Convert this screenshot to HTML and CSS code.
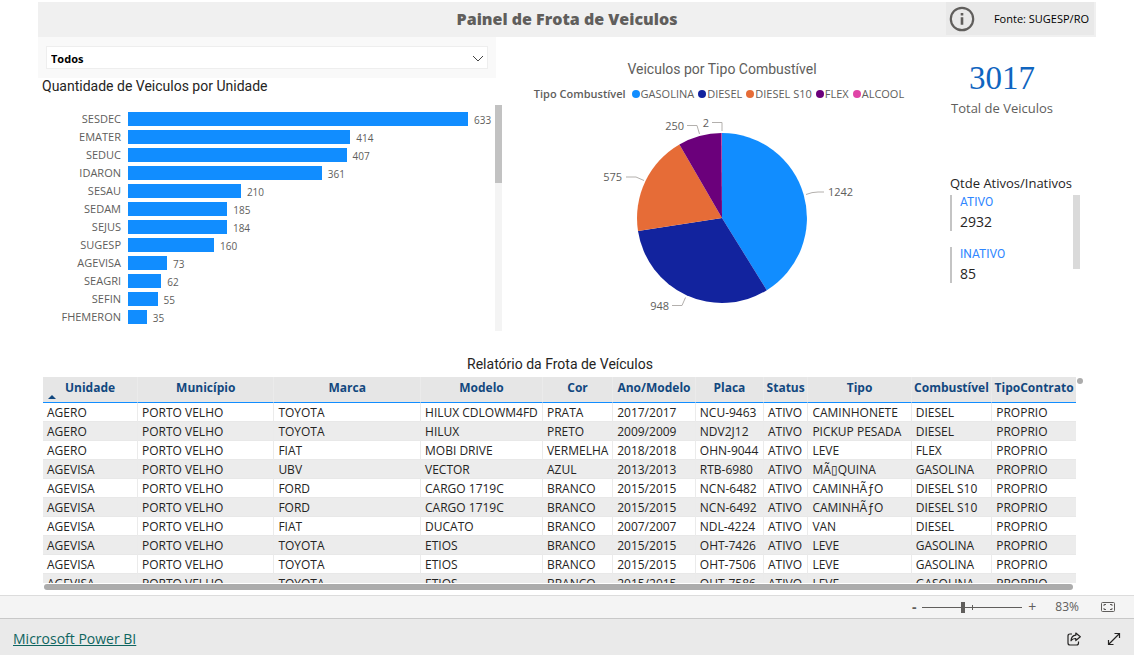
FILE: index.html
```html
<!DOCTYPE html>
<html lang="pt-BR">
<head>
<meta charset="utf-8">
<title>Painel de Frota de Veiculos</title>
<link rel="stylesheet" href="styles.css">
</head>
<body>
<main class="report">
  <header class="banner">
    <h1 class="banner-title">Painel de Frota de Veiculos</h1>
    <div class="source">
      <svg class="info-icon" viewBox="0 0 26 26" aria-hidden="true"><circle cx="13" cy="13" r="11.2" fill="none" stroke="#605e5c" stroke-width="2.2"/><path d="M13 7v2.6M13 11.2v7.6" stroke="#605e5c" stroke-width="2.6"/></svg>
      <span>Fonte: SUGESP/RO</span>
    </div>
  </header>

  <div class="visuals">
    <section class="units">
      <div class="slicer">
        <select class="slicer-select" aria-label="Unidade"><option>Todos</option></select>
        <svg class="slicer-arrow" viewBox="0 0 12 8" aria-hidden="true"><path d="M1 1l5 5 5-5" fill="none" stroke="#444" stroke-width="1"/></svg>
      </div>
      <h2 class="visual-title units-title">Quantidade de Veiculos por Unidade</h2>
      <div class="bar-area">
        <ul class="bars">
          <li class="bar-row"><span class="bar-name">SESDEC</span><span class="track"><span class="bar" style="width:100%"></span><span class="bar-value">633</span></span></li>
          <li class="bar-row"><span class="bar-name">EMATER</span><span class="track"><span class="bar" style="width:65.4%"></span><span class="bar-value">414</span></span></li>
          <li class="bar-row"><span class="bar-name">SEDUC</span><span class="track"><span class="bar" style="width:64.3%"></span><span class="bar-value">407</span></span></li>
          <li class="bar-row"><span class="bar-name">IDARON</span><span class="track"><span class="bar" style="width:57%"></span><span class="bar-value">361</span></span></li>
          <li class="bar-row"><span class="bar-name">SESAU</span><span class="track"><span class="bar" style="width:33.2%"></span><span class="bar-value">210</span></span></li>
          <li class="bar-row"><span class="bar-name">SEDAM</span><span class="track"><span class="bar" style="width:29.2%"></span><span class="bar-value">185</span></span></li>
          <li class="bar-row"><span class="bar-name">SEJUS</span><span class="track"><span class="bar" style="width:29.1%"></span><span class="bar-value">184</span></span></li>
          <li class="bar-row"><span class="bar-name">SUGESP</span><span class="track"><span class="bar" style="width:25.3%"></span><span class="bar-value">160</span></span></li>
          <li class="bar-row"><span class="bar-name">AGEVISA</span><span class="track"><span class="bar" style="width:11.5%"></span><span class="bar-value">73</span></span></li>
          <li class="bar-row"><span class="bar-name">SEAGRI</span><span class="track"><span class="bar" style="width:9.8%"></span><span class="bar-value">62</span></span></li>
          <li class="bar-row"><span class="bar-name">SEFIN</span><span class="track"><span class="bar" style="width:8.7%"></span><span class="bar-value">55</span></span></li>
          <li class="bar-row"><span class="bar-name">FHEMERON</span><span class="track"><span class="bar" style="width:5.5%"></span><span class="bar-value">35</span></span></li>
        </ul>
        <div class="bar-scroll"><div class="bar-thumb"></div></div>
      </div>
    </section>

    <section class="fuel">
      <h2 class="visual-title fuel-title">Veiculos por Tipo Combustível</h2>
      <div class="legend">
        <strong class="legend-title">Tipo Combustível</strong>
        <span class="key gasolina">GASOLINA</span>
        <span class="key diesel">DIESEL</span>
        <span class="key s10">DIESEL S10</span>
        <span class="key flex">FLEX</span>
        <span class="key alcool">ALCOOL</span>
      </div>
      <svg class="pie" viewBox="0 0 320 200" role="img" aria-label="Veiculos por Tipo Combustível">
        <path fill="#118dff" d="M160 103V18A85 85 0 0 1 204.800 175.200Z"/>
        <path fill="#12239e" d="M160 103L204.800 175.200A85 85 0 0 1 76 115.900Z"/>
        <path fill="#e66c37" d="M160 103L76 115.900A85 85 0 0 1 117.400 29.500Z"/>
        <path fill="#6b007b" d="M160 103L117.400 29.500A85 85 0 0 1 159.600 18Z"/>
        <path fill="#e044a7" d="M160 103L159.600 18H160Z"/>
        <g fill="none" stroke="#b3b0ad"><path d="M244 79.500Q250 77 256 77H262"/><path d="M110 190.500H120L123.500 182.500"/><path d="M64 62H74L82 65.500"/><path d="M125 10.500H135L137.500 19"/><path d="M150 7.500H160V16"/></g>
        <g class="pie-label"><text x="266" y="81">1242</text><text x="107" y="195" text-anchor="end">948</text><text x="60" y="66" text-anchor="end">575</text><text x="122" y="15" text-anchor="end">250</text><text x="147" y="12" text-anchor="end">2</text></g>
      </svg>
    </section>

    <section class="totals">
      <div class="total-number">3017</div>
      <div class="total-caption">Total de Veiculos</div>
      <h2 class="status-title">Qtde Ativos/Inativos</h2>
      <div class="status-area">
        <dl class="status-list">
          <div class="status-card"><dt>ATIVO</dt><dd>2932</dd></div>
          <div class="status-card"><dt>INATIVO</dt><dd>85</dd></div>
        </dl>
        <div class="status-thumb"></div>
      </div>
    </section>
  </div>

  <section class="fleet">
    <h2 class="visual-title fleet-title">Relatório da Frota de Veículos</h2>
    <div class="fleet-body">
      <div class="fleet-view">
        <table class="fleet-table">
          <colgroup><col class="c-unit"><col class="c-city"><col class="c-brand"><col class="c-model"><col class="c-color"><col class="c-year"><col class="c-plate"><col class="c-status"><col class="c-type"><col class="c-fuel"><col class="c-deal"></colgroup>
          <thead><tr><th class="sorted">Unidade</th><th>Município</th><th>Marca</th><th>Modelo</th><th>Cor</th><th>Ano/Modelo</th><th>Placa</th><th>Status</th><th>Tipo</th><th>Combustível</th><th>TipoContrato</th></tr></thead>
          <tbody>
            <tr><td>AGERO</td><td>PORTO VELHO</td><td>TOYOTA</td><td>HILUX CDLOWM4FD</td><td>PRATA</td><td>2017/2017</td><td>NCU-9463</td><td>ATIVO</td><td>CAMINHONETE</td><td>DIESEL</td><td>PROPRIO</td></tr>
            <tr><td>AGERO</td><td>PORTO VELHO</td><td>TOYOTA</td><td>HILUX</td><td>PRETO</td><td>2009/2009</td><td>NDV2J12</td><td>ATIVO</td><td>PICKUP PESADA</td><td>DIESEL</td><td>PROPRIO</td></tr>
            <tr><td>AGERO</td><td>PORTO VELHO</td><td>FIAT</td><td>MOBI DRIVE</td><td>VERMELHA</td><td>2018/2018</td><td>OHN-9044</td><td>ATIVO</td><td>LEVE</td><td>FLEX</td><td>PROPRIO</td></tr>
            <tr><td>AGEVISA</td><td>PORTO VELHO</td><td>UBV</td><td>VECTOR</td><td>AZUL</td><td>2013/2013</td><td>RTB-6980</td><td>ATIVO</td><td>MÃ▯QUINA</td><td>GASOLINA</td><td>PROPRIO</td></tr>
            <tr><td>AGEVISA</td><td>PORTO VELHO</td><td>FORD</td><td>CARGO 1719C</td><td>BRANCO</td><td>2015/2015</td><td>NCN-6482</td><td>ATIVO</td><td>CAMINHÃƒO</td><td>DIESEL S10</td><td>PROPRIO</td></tr>
            <tr><td>AGEVISA</td><td>PORTO VELHO</td><td>FORD</td><td>CARGO 1719C</td><td>BRANCO</td><td>2015/2015</td><td>NCN-6492</td><td>ATIVO</td><td>CAMINHÃƒO</td><td>DIESEL S10</td><td>PROPRIO</td></tr>
            <tr><td>AGEVISA</td><td>PORTO VELHO</td><td>FIAT</td><td>DUCATO</td><td>BRANCO</td><td>2007/2007</td><td>NDL-4224</td><td>ATIVO</td><td>VAN</td><td>DIESEL</td><td>PROPRIO</td></tr>
            <tr><td>AGEVISA</td><td>PORTO VELHO</td><td>TOYOTA</td><td>ETIOS</td><td>BRANCO</td><td>2015/2015</td><td>OHT-7426</td><td>ATIVO</td><td>LEVE</td><td>GASOLINA</td><td>PROPRIO</td></tr>
            <tr><td>AGEVISA</td><td>PORTO VELHO</td><td>TOYOTA</td><td>ETIOS</td><td>BRANCO</td><td>2015/2015</td><td>OHT-7506</td><td>ATIVO</td><td>LEVE</td><td>GASOLINA</td><td>PROPRIO</td></tr>
            <tr><td>AGEVISA</td><td>PORTO VELHO</td><td>TOYOTA</td><td>ETIOS</td><td>BRANCO</td><td>2015/2015</td><td>OHT-7586</td><td>ATIVO</td><td>LEVE</td><td>GASOLINA</td><td>PROPRIO</td></tr>
          </tbody>
        </table>
      </div>
      <div class="fleet-dot"></div>
    </div>
    <div class="fleet-scroll"></div>
  </section>
</main>

<div class="zoom-bar">
  <button class="zoom-button zoom-out" aria-label="Reduzir">-</button>
  <input class="zoom-range" type="range" min="0" max="100" value="40" aria-label="Zoom">
  <button class="zoom-button" aria-label="Ampliar">+</button>
  <span class="zoom-value">83%</span>
  <button class="icon-button" aria-label="Ajustar à página"><svg width="14" height="10" viewBox="0 0 14 10" fill="none" stroke="#605e5c"><rect x=".5" y=".5" width="13" height="9" rx="1"/><path d="M3 4V2.500H5M9 2.500H11V4M11 6V7.500H9M5 7.500H3V6"/></svg></button>
</div>
<footer class="brand-bar">
  <a class="brand" href="#">Microsoft Power BI</a>
  <button class="icon-button" aria-label="Compartilhar"><svg width="14" height="14" viewBox="0 0 14 14" fill="none" stroke="#252423" stroke-width="1.200" stroke-linejoin="round"><path d="M5 2H3Q1 2 1 4V11Q1 13 3 13H9.500Q11.500 13 11.500 11V9.500"/><path d="M8.800 1L13.300 4.800 8.800 8.500V6.500Q5.500 6.300 4 8.800 4.300 3.600 8.800 3.200Z"/></svg></button>
  <button class="icon-button" aria-label="Tela inteira"><svg width="14" height="14" viewBox="0 0 14 14" fill="none" stroke="#252423" stroke-width="1.200"><path d="M1.500 12.500L12.500 1.500M7.500 1.500H12.500V6M1.500 8V12.500H6.500"/></svg></button>
</footer>
</body>
</html>
```

FILE: styles.css
```css
* { box-sizing: border-box; }
body {
  margin: 0;
  height: 100vh;
  min-height: 500px;
  display: flex;
  flex-direction: column;
  background: #fff;
  color: #252423;
  font: 12px/16px "Open Sans", "Noto Sans", sans-serif;
}
h1, h2, ul, dl, dd { margin: 0; padding: 0; font-weight: 400; }
ul { list-style: none; }
button { border: 0; padding: 0; background: none; font: inherit; color: inherit; }

.report { flex: 1; min-height: 0; display: flex; flex-direction: column; padding: 2px 38px 5px; }

.banner { display: grid; grid-template-columns: 1fr auto 1fr; height: 35px; background: #f0f0f0; }
.banner-title { grid-column: 2; font: 800 16px/34px "Open Sans", sans-serif; color: #605e5c; }
.source {
  justify-self: end;
  display: flex;
  align-items: center;
  justify-content: space-between;
  width: 148px;
  margin: 0 2px 2px 0;
  padding: 0 5px 0 3px;
  background: #e9e9e9;
  color: #000;
  font-size: 11px;
}
.info-icon { width: 26px; height: 26px; }

.visuals { display: grid; grid-template-columns: 464fr 440fr 154fr; height: 318px; }
.visual-title { font: 400 14px/20px Roboto, sans-serif; }

.units { display: flex; flex-direction: column; }
.slicer { position: relative; margin-right: 6px; padding: 9px 8px; background: #f9f9f9; }
.slicer-select {
  display: block;
  width: 100%;
  height: 23px;
  padding: 2px 4px 0;
  appearance: none;
  border: 1px solid #eee;
  border-radius: 0;
  background: #fff;
  color: #000;
  font: 700 11px/20px "Open Sans", sans-serif;
}
.slicer-arrow { position: absolute; right: 12px; top: 18px; width: 12px; height: 8px; pointer-events: none; }
.units-title { margin: -2px 0 9px 4px; }
.bar-area { display: flex; height: 226px; }
.bars { flex: 1; padding-top: 5px; }
.bar-row { display: flex; align-items: center; height: 18px; }
.bar-name { width: 83px; margin-right: 7px; text-align: right; font-size: 11px; color: #605e5c; }
.track { flex: 1; display: flex; align-items: center; padding-right: 27px; }
.bar { flex: none; height: 14px; background: #118dff; }
.bar-value { margin-left: 6px; padding-top: 2px; font-size: 10px; color: #605e5c; }
.bar-scroll { width: 7px; background: #f4f4f4; }
.bar-thumb { height: 78px; background: #c2c2c2; }

.fuel { display: flex; flex-direction: column; align-items: center; padding-top: 22px; color: #605e5c; }
.legend { display: flex; align-items: center; gap: 4px; margin: 7px 6px 13px 0; font-size: 11px; white-space: nowrap; }
.legend-title { margin-right: 2px; font-weight: 600; }
.key { display: flex; align-items: center; gap: 1px; }
.key::before { content: ""; width: 8px; height: 8px; border-radius: 50%; background: currentColor; }
.gasolina::before { background: #118dff; }
.diesel::before { background: #12239e; }
.s10::before { background: #e66c37; }
.flex::before { background: #6b007b; }
.alcool::before { background: #e044a7; }
.pie { width: 320px; height: 200px; }
.pie-label { fill: #605e5c; font-size: 11px; }

.totals { padding: 23px 16px 0 8px; }
.total-number { text-align: center; margin-right: 26px; font: 33px/36px "Liberation Serif", serif; color: #1065bf; }
.total-caption { margin: 3px 26px 56px 0; text-align: center; font-size: 13px; line-height: 18px; color: #605e5c; white-space: nowrap; }
.status-title { font-size: 13px; line-height: 20px; white-space: nowrap; }
.status-area { display: flex; justify-content: space-between; padding-top: 2px; }
.status-card { margin-bottom: 16px; padding-left: 8px; height: 36px; border-left: 2px solid #c4c4c4; }
.status-card dt { font: 12px/14px Roboto, sans-serif; color: #2e86ff; }
.status-card dd { font: 14px/20px "Open Sans", sans-serif; padding-top: 3px; }
.status-thumb { width: 7px; height: 74px; background: #dadada; }

.fleet { flex: 1; min-height: 0; display: flex; flex-direction: column; padding-left: 5px; }
.fleet-title { margin: -1px 19px 3px 0; text-align: center; }
.fleet-body { flex: 1; min-height: 0; display: flex; }
.fleet-view { flex: 1; min-width: 0; overflow: hidden; }
.fleet-dot { width: 6px; height: 6px; margin: 1px 13px 0 1px; border-radius: 50%; background: #acacac; }
.fleet-scroll { height: 6px; margin: 1px 23px 0 1px; border-radius: 3px; background: #acacac; }
.fleet-table { width: 100%; table-layout: fixed; border-collapse: separate; border-spacing: 0; white-space: nowrap; }
.fleet-table th {
  position: relative;
  height: 26px;
  padding: 0 0 5px;
  background: #e6e6e6;
  border-bottom: 1px solid #118dff;
  border-right: 1px solid #ebebeb;
  color: #12487f;
  font-size: 12px;
  font-weight: 700;
  line-height: 15px;
}
.sorted::after {
  content: "";
  position: absolute;
  left: 5px;
  bottom: 3px;
  border: 4px solid transparent;
  border-top: 0;
  border-bottom-color: #12487f;
}
.fleet-table td { height: 19px; padding: 1px 0 0 4px; border-bottom: 1px solid #e8e8e8; border-right: 1px solid #ebebeb; line-height: 17px; }
.fleet-table tr:nth-child(even) td { background: #ececec; }
.fleet-table th:last-child, .fleet-table td:last-child { border-right: 0; }
.c-unit { width: 9.2%; }
.c-city { width: 13.2%; }
.c-brand { width: 14.2%; }
.c-model { width: 11.8%; }
.c-color { width: 6.8%; }
.c-year { width: 8%; }
.c-plate { width: 6.6%; }
.c-status { width: 4.3%; }
.c-type { width: 10%; }
.c-fuel { width: 7.8%; }
.c-deal { width: 8.1%; }

.zoom-bar {
  display: flex;
  align-items: center;
  justify-content: flex-end;
  height: 23px;
  padding-right: 19px;
  background: #f4f4f4;
  border-top: 1px solid #dcdcdc;
  color: #605e5c;
}
.zoom-button { width: 10px; font-size: 14px; }
.zoom-out { font-weight: 700; }
.zoom-range { width: 100px; height: 12px; margin: 0 5px 0 3px; appearance: none; background: linear-gradient(#605e5c, #605e5c) center / 100% 1px no-repeat, linear-gradient(#605e5c, #605e5c) 50% 50% / 1px 5px no-repeat; }
.zoom-range::-webkit-slider-thumb { appearance: none; width: 4px; height: 11px; background: #605e5c; }
.zoom-value { margin: 0 22px 0 18px; }
.icon-button { display: flex; }
.brand-bar {
  display: flex;
  align-items: center;
  gap: 26px;
  height: 37px;
  padding: 3px 13px 0;
  background: #eaeaea;
  border-top: 1px solid #c8c8c8;
}
.brand { margin-right: auto; font-size: 14px; line-height: 20px; color: #0f6560; }
```
